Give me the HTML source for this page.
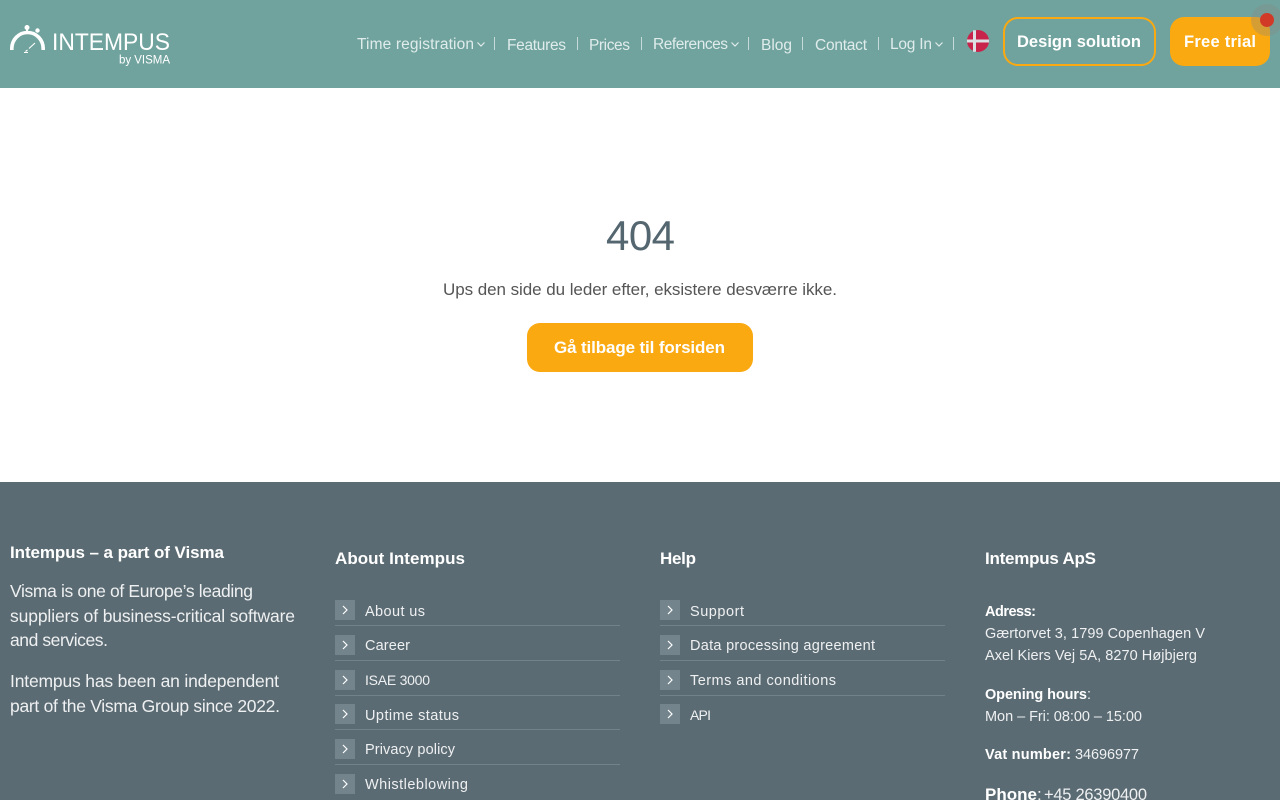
<!DOCTYPE html>
<html lang="en">
<head>
<meta charset="utf-8">
<title>404 - Intempus</title>
<style>
html,body{margin:0;padding:0;background:#fff;width:1280px;height:800px;overflow:hidden}
svg{display:block}
text{font-family:"Liberation Sans",sans-serif;white-space:pre}
.nav{font-size:15.5px;fill:#dfeceb}
.btn{font-size:16.500px;font-weight:700;fill:#fff}
.fb{font-size:17px;font-weight:700;fill:#fff}
.fp{font-size:17.500px;fill:#eef0f1}
.ft{font-size:17px;font-weight:700;fill:#fff}
.li{font-size:14.500px;fill:#eef0f1}
.ad{font-size:14.500px;fill:#eef0f1}
.adb{font-size:14.500px;font-weight:700;fill:#fff}
.sep{stroke:#c6dbd9;stroke-width:1}
.ln{stroke:#72828a;stroke-width:1}
.ic{fill:#74848c}
.ch{fill:none;stroke:#fff;stroke-width:1.2}
.dd{fill:none;stroke:#dfeceb;stroke-width:1.2}
</style>
</head>
<body>
<svg width="1280" height="800" viewBox="0 0 1280 800" xmlns="http://www.w3.org/2000/svg">
<rect width="1280" height="88" fill="#70a39e"/>
<rect y="482" width="1280" height="318" fill="#5b6b73"/>

<!-- logo -->
<path d="M11.800 50V48.500A15.700 16 0 0 1 43.200 48.500V50" fill="none" stroke="#fff" stroke-width="3.600"/>
<circle cx="27" cy="27.500" r="2.500" fill="#fff"/>
<rect x="26" y="28" width="2" height="4" fill="#fff"/>
<circle cx="37.500" cy="30.500" r="2.200" fill="#fff"/>
<path d="M35 43L29 48.500M27.500 50L25.500 51.500M24 52.500H28" fill="none" stroke="#fff" stroke-width="1.100"/>
<text x="52" y="50" font-size="24.500" fill="#fff" textLength="118" lengthAdjust="spacingAndGlyphs">INTEMPUS</text>
<text x="119" y="63.500" font-size="11.500" fill="#fff" textLength="51" lengthAdjust="spacing">by VISMA</text>

<!-- nav -->
<text class="nav" x="357" y="49" textLength="117" lengthAdjust="spacing">Time registration</text>
<path class="dd" d="M477.500 42.500L481 46L484.500 42.500"/>
<text class="nav" x="507" y="50" textLength="59" lengthAdjust="spacing">Features</text>
<text class="nav" x="589" y="50" textLength="41" lengthAdjust="spacing">Prices</text>
<text class="nav" x="653" y="49" textLength="75" lengthAdjust="spacing">References</text>
<path class="dd" d="M731.500 42.500L735 46L738.500 42.500"/>
<text class="nav" x="761" y="50" textLength="31" lengthAdjust="spacing">Blog</text>
<text class="nav" x="815" y="50" textLength="52" lengthAdjust="spacing">Contact</text>
<text class="nav" x="890" y="49" textLength="42" lengthAdjust="spacing">Log In</text>
<path class="dd" d="M935.500 42.500L939 46L942.500 42.500"/>
<path class="sep" d="M494.500 37V50M577.500 37V50M641.500 37V50M748.500 37V50M802.500 37V50M878.500 37V50M953.500 37V50"/>

<!-- flag -->
<circle cx="978" cy="41" r="11" fill="#c8234a"/>
<path d="M967 41H989M974.500 30.200V51.800" stroke="#dcdfe3" stroke-width="3" fill="none"/>

<!-- buttons -->
<rect x="1004" y="18" width="151" height="47" rx="14" fill="none" stroke="#faa911" stroke-width="2"/>
<text class="btn" x="1017" y="47" textLength="124" lengthAdjust="spacing">Design solution</text>
<rect x="1170" y="17" width="100" height="49" rx="14" fill="#faa911"/>
<text class="btn" x="1184" y="47" textLength="72" lengthAdjust="spacing">Free trial</text>
<circle cx="1267" cy="20" r="16" fill="#8a8a80" fill-opacity=".32"/>
<circle cx="1267" cy="20" r="7" fill="#d23a28"/>

<!-- main -->
<text x="606" y="250" font-size="42" fill="#54666f" textLength="69" lengthAdjust="spacing">404</text>
<text x="443" y="295" font-size="17" fill="#555" textLength="394" lengthAdjust="spacing">Ups den side du leder efter, eksistere desværre ikke.</text>
<rect x="527" y="323" width="226" height="49" rx="13" fill="#faa911"/>
<text x="554" y="353" font-size="17" font-weight="700" fill="#fff" textLength="171" lengthAdjust="spacing">Gå tilbage til forsiden</text>

<!-- footer col 1 -->
<text class="fb" x="10" y="558" textLength="214" lengthAdjust="spacing">Intempus – a part of Visma</text>
<text class="fp" x="10" y="597" textLength="243" lengthAdjust="spacing">Visma is one of Europe’s leading</text>
<text class="fp" x="10" y="622" textLength="285" lengthAdjust="spacing">suppliers of business-critical software</text>
<text class="fp" x="10" y="646" textLength="98" lengthAdjust="spacing">and services.</text>
<text class="fp" x="10" y="687" textLength="269" lengthAdjust="spacing">Intempus has been an independent</text>
<text class="fp" x="10" y="712" textLength="270" lengthAdjust="spacing">part of the Visma Group since 2022.</text>

<!-- footer col 2 -->
<text class="ft" x="335" y="564" textLength="130" lengthAdjust="spacing">About Intempus</text>
<rect class="ic" x="335" y="600" width="20" height="20"/><path class="ch" d="M343 606L347 610L343 614"/>
<text class="li" x="365" y="616" textLength="60" lengthAdjust="spacing">About us</text>
<rect class="ic" x="335" y="635" width="20" height="20"/><path class="ch" d="M343 641L347 645L343 649"/>
<text class="li" x="365" y="650" textLength="45" lengthAdjust="spacing">Career</text>
<rect class="ic" x="335" y="670" width="20" height="20"/><path class="ch" d="M343 676L347 680L343 684"/>
<text class="li" x="365" y="685" style="font-size:14px" textLength="65" lengthAdjust="spacing">ISAE 3000</text>
<rect class="ic" x="335" y="704" width="20" height="20"/><path class="ch" d="M343 710L347 714L343 718"/>
<text class="li" x="365" y="720" textLength="94" lengthAdjust="spacing">Uptime status</text>
<rect class="ic" x="335" y="739" width="20" height="20"/><path class="ch" d="M343 745L347 749L343 753"/>
<text class="li" x="365" y="754" textLength="90" lengthAdjust="spacing">Privacy policy</text>
<rect class="ic" x="335" y="774" width="20" height="20"/><path class="ch" d="M343 780L347 784L343 788"/>
<text class="li" x="365" y="789" textLength="103" lengthAdjust="spacing">Whistleblowing</text>
<path class="ln" d="M335 625.500H620M335 660.500H620M335 695.500H620M335 729.500H620M335 764.500H620"/>

<!-- footer col 3 -->
<text class="ft" x="660" y="564" textLength="36" lengthAdjust="spacing">Help</text>
<rect class="ic" x="660" y="600" width="20" height="20"/><path class="ch" d="M668 606L672 610L668 614"/>
<text class="li" x="690" y="616" textLength="54" lengthAdjust="spacing">Support</text>
<rect class="ic" x="660" y="635" width="20" height="20"/><path class="ch" d="M668 641L672 645L668 649"/>
<text class="li" x="690" y="650" textLength="185" lengthAdjust="spacing">Data processing agreement</text>
<rect class="ic" x="660" y="670" width="20" height="20"/><path class="ch" d="M668 676L672 680L668 684"/>
<text class="li" x="690" y="685" textLength="146" lengthAdjust="spacing">Terms and conditions</text>
<rect class="ic" x="660" y="704" width="20" height="20"/><path class="ch" d="M668 710L672 714L668 718"/>
<text class="li" x="690" y="720" style="font-size:14px" textLength="21" lengthAdjust="spacing">API</text>
<path class="ln" d="M660 625.500H945M660 660.500H945M660 695.500H945"/>

<!-- footer col 4 -->
<text class="ft" x="985" y="564" textLength="111" lengthAdjust="spacing">Intempus ApS</text>
<text class="adb" x="985" y="616" textLength="51" lengthAdjust="spacing">Adress:</text>
<text class="ad" x="985" y="638" textLength="220" lengthAdjust="spacing">Gærtorvet 3, 1799 Copenhagen V</text>
<text class="ad" x="985" y="660" textLength="212" lengthAdjust="spacing">Axel Kiers Vej 5A, 8270 Højbjerg</text>
<text class="adb" x="985" y="699" textLength="102" lengthAdjust="spacing">Opening hours</text>
<text class="ad" x="1087" y="699">:</text>
<text class="ad" x="985" y="721" textLength="157" lengthAdjust="spacing">Mon – Fri: 08:00 – 15:00</text>
<text class="adb" x="985" y="759" textLength="86" lengthAdjust="spacing">Vat number:</text>
<text class="ad" x="1075" y="759" textLength="64" lengthAdjust="spacing">34696977</text>
<text x="985" y="800" font-size="17" font-weight="700" fill="#fff" textLength="52" lengthAdjust="spacing">Phone</text>
<text x="1037" y="800" font-size="17" fill="#eef0f1">:</text>
<text x="1044" y="800" font-size="16.500" fill="#eef0f1" textLength="103" lengthAdjust="spacing">+45 26390400</text>
</svg>
</body>
</html>
